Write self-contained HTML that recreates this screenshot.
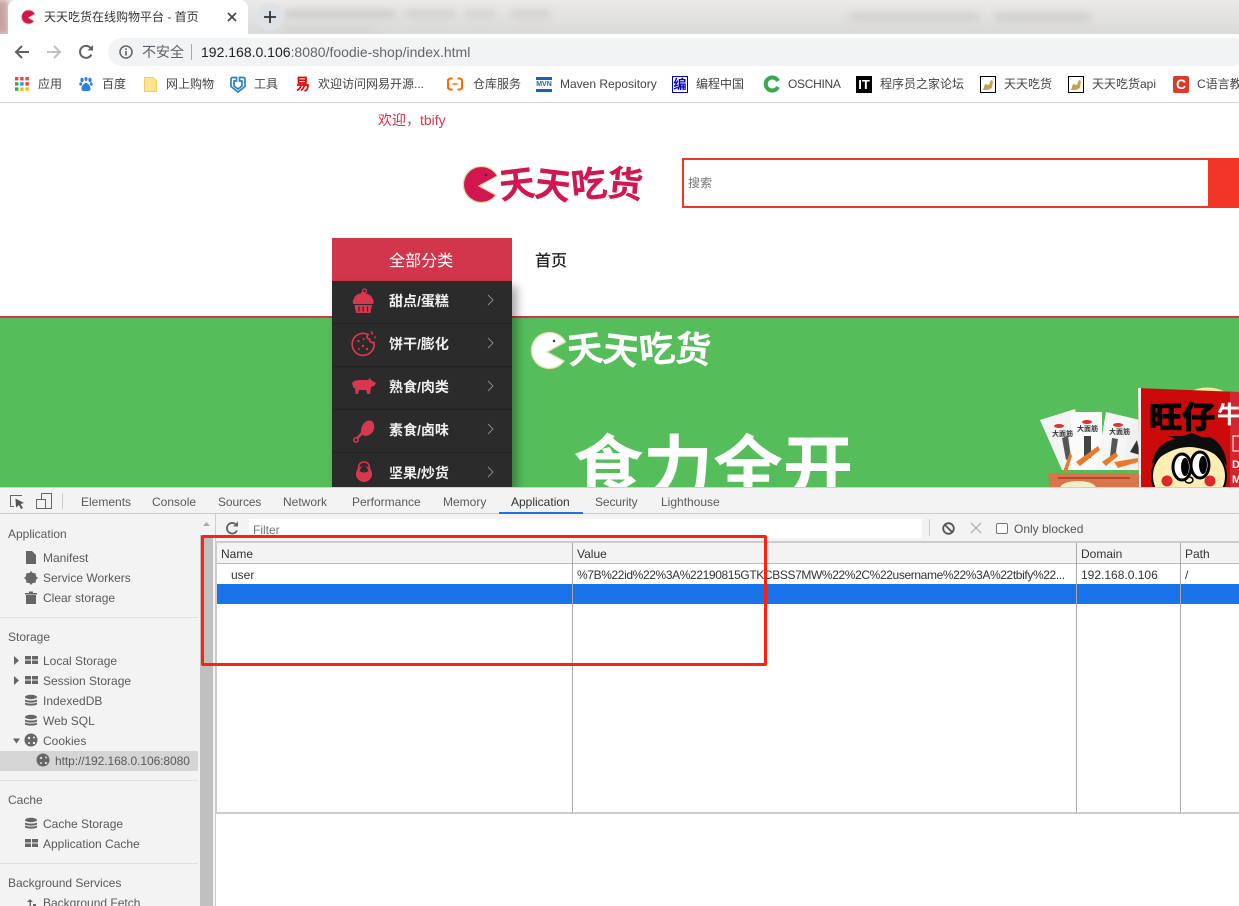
<!DOCTYPE html>
<html lang="zh"><head><meta charset="utf-8"><title>天天吃货</title>
<style>
html,body{margin:0;padding:0;width:1239px;height:906px;overflow:hidden;background:#fff}
body{position:relative;font-family:"Liberation Sans","Noto Sans CJK SC",sans-serif;font-size:12px;color:#444}
.a{position:absolute}
.t{position:absolute;white-space:nowrap;line-height:16px}
svg{position:absolute;overflow:visible}
.b{color:#444;top:76px}
.tab{color:#5a5a5a;top:494px}
.s{color:#5a5a5a}
.m{color:#f0f0f0;font-size:14px;font-weight:bold;left:389px}
.sep{position:absolute;left:0;width:198px;height:1px;background:#e0e0e0}
.v{position:absolute;width:1px;background:#aaa;top:543px;height:270px}
.c{position:absolute;left:332px;width:180px;height:43px;background:#2b2b2b;border-bottom:1px solid #222;box-sizing:border-box}
.r{display:inline-block}
</style></head><body>

<!-- tab strip -->
<div class="a" style="left:0;top:0;width:1239px;height:34px;background:linear-gradient(#eceae8,#d9d9d7);overflow:hidden">
 <div class="a" style="left:-6px;top:0;width:14px;height:34px;background:#c9a0a0;filter:blur(3px)"></div>
 <div class="a" style="left:285px;top:11px;width:110px;height:6px;background:#c6c6c6;filter:blur(4px)"></div>
 <div class="a" style="left:405px;top:11px;width:50px;height:6px;background:#cbcbcb;filter:blur(4px)"></div>
 <div class="a" style="left:465px;top:11px;width:30px;height:6px;background:#cecece;filter:blur(4px)"></div>
 <div class="a" style="left:510px;top:11px;width:40px;height:6px;background:#cbcbcb;filter:blur(4px)"></div>
 <div class="a" style="left:285px;top:27px;width:90px;height:4px;background:#d2d2d2;filter:blur(3px)"></div>
 <div class="a" style="left:850px;top:14px;width:130px;height:6px;background:#cbcbc9;filter:blur(4px)"></div>
 <div class="a" style="left:995px;top:14px;width:95px;height:6px;background:#c8c8c6;filter:blur(4px)"></div>
</div>
<div class="a" style="left:8px;top:0;width:240px;height:34px;background:#fff;border-radius:8px 8px 0 0"></div>
<div class="a" style="left:0;top:34px;width:1239px;height:68px;background:#fff"></div>
<div class="a" style="left:0;top:102px;width:1239px;height:1px;background:#d4d4d4"></div>
<svg style="left:20px;top:9px" width="16" height="16" viewBox="0 0 16 16"><path d="M8.500 1A7 7 0 1 0 14.200 12L8.500 8.800L15 5A7 7 0 0 0 8.500 1Z" fill="#d2164f" stroke="#e2dca8" stroke-width=".7"/></svg>
<div class="t" style="left:44px;top:9px;color:#333;font-size:12px">天天吃货在线购物平台 - 首页</div>
<svg style="left:227px;top:12px" width="10" height="10" viewBox="0 0 10 10"><path d="M1 1L9 9M9 1L1 9" stroke="#444" stroke-width="1.700"/></svg>
<div class="a" style="left:256px;top:3px;width:28px;height:28px;border-radius:50%;background:#dee1e6"></div>
<svg style="left:264px;top:11px" width="12" height="12" viewBox="0 0 12 12"><path d="M6 0V12M0 6H12" stroke="#333" stroke-width="1.800"/></svg>

<!-- nav -->
<svg style="left:14px;top:44px" width="16" height="16" viewBox="0 0 16 16"><path d="M15 8H2M8 2L2 8L8 14" fill="none" stroke="#5f6368" stroke-width="2"/></svg>
<svg style="left:46px;top:44px" width="16" height="16" viewBox="0 0 16 16"><path d="M1 8H14M8 2L14 8L8 14" fill="none" stroke="#bdc1c6" stroke-width="2"/></svg>
<svg style="left:78px;top:44px" width="16" height="16" viewBox="0 0 16 16"><path d="M13.400 10.500A6 6 0 1 1 12.600 4" fill="none" stroke="#5f6368" stroke-width="2"/><path d="M9.500 6.500H15V1Z" fill="#5f6368"/></svg>
<div class="a" style="left:108px;top:38px;width:1140px;height:28px;border-radius:14px;background:#f1f3f4"></div>
<svg style="left:119px;top:45px" width="14" height="14" viewBox="0 0 14 14"><circle cx="7" cy="7" r="6" fill="none" stroke="#5f6368" stroke-width="1.500"/><path d="M7 6V10.500M7 3.400V5" stroke="#5f6368" stroke-width="1.600"/></svg>
<div class="t" style="left:142px;top:44px;font-size:14px;color:#5f6368">不安全</div>
<div class="a" style="left:191px;top:44px;width:1px;height:16px;background:#a8a8a8"></div>
<div class="t" style="left:201px;top:44px;font-size:14px;color:#666"><span style="color:#222">192.168.0.106</span>:8080/foodie-shop/index.html</div>

<!-- bookmarks -->
<svg style="left:15px;top:77px" width="14" height="14" viewBox="0 0 14 14"><rect x="0" y="0" width="3.400" height="3.400" fill="#e8453c"/><rect x="5.200" y="0" width="3.400" height="3.400" fill="#e8453c"/><rect x="10.400" y="0" width="3.400" height="3.400" fill="#e8453c"/><rect x="0" y="5.200" width="3.400" height="3.400" fill="#34a853"/><rect x="5.200" y="5.200" width="3.400" height="3.400" fill="#4285f4"/><rect x="10.400" y="5.200" width="3.400" height="3.400" fill="#ea4335"/><rect x="0" y="10.400" width="3.400" height="3.400" fill="#34a853"/><rect x="5.200" y="10.400" width="3.400" height="3.400" fill="#fbbc05"/><rect x="10.400" y="10.400" width="3.400" height="3.400" fill="#fbbc05"/></svg>
<div class="t b" style="left:38px">应用</div>
<svg style="left:79px;top:77px" width="14" height="15" viewBox="0 0 14 15"><g fill="#2e7ee6"><ellipse cx="3" cy="3" rx="1.600" ry="2.200"/><ellipse cx="7" cy="2" rx="1.500" ry="2"/><ellipse cx="11" cy="3" rx="1.600" ry="2.200"/><ellipse cx="1.700" cy="7" rx="1.400" ry="1.800"/><ellipse cx="12.300" cy="7" rx="1.400" ry="1.800"/><path d="M7 6C4.500 6 2 10 2.500 12.500C3 14.500 5 14 7 14S11 14.500 11.500 12.500C12 10 9.500 6 7 6Z"/></g></svg>
<div class="t b" style="left:102px">百度</div>
<svg style="left:144px;top:77px" width="13" height="15" viewBox="0 0 13 15"><path d="M.5.500H9L12.500 4V14.500H.5Z" fill="#fee48d" stroke="#efcf6a"/></svg>
<div class="t b" style="left:166px">网上购物</div>
<svg style="left:230px;top:76px" width="16" height="17" viewBox="0 0 16 17"><path d="M3 1.500H6.500V5H4V10L8 13L12 10V5H9.500V1.500H13C14.500 1.500 15 2.500 15 3.500V10.500L8 16L1 10.500V3.500C1 2.500 1.500 1.500 3 1.500Z" fill="none" stroke="#2f7fc1" stroke-width="1.700"/></svg>
<div class="t b" style="left:254px">工具</div>
<svg style="left:296px;top:76px" width="13" height="16" viewBox="0 0 13 16"><path d="M2.500 1.500H10V7H2.500ZM2.500 4.200H10M1 9H12C12 12 11 14.500 8.500 15M5 9C4.500 11.500 3 13.500 1 14.500M8.500 9C8 11.500 7 13 5 14.500" fill="none" stroke="#e60000" stroke-width="1.700"/></svg>
<div class="t b" style="left:318px">欢迎访问网易开源...</div>
<svg style="left:447px;top:77px" width="16" height="14" viewBox="0 0 16 14"><path d="M5.500 1.500H2.500L1 3V11L2.500 12.500H5.500M10.500 1.500H13.500L15 3V11L13.500 12.500H10.500" fill="none" stroke="#ff6a00" stroke-width="2"/><path d="M5.500 7H10.500" stroke="#ff6a00" stroke-width="1.500"/></svg>
<div class="t b" style="left:473px">仓库服务</div>
<div class="a" style="left:536px;top:77px;width:16px;height:15px;background:#fff;border-top:3px solid #1c5fb5;border-bottom:3px solid #1c5fb5;box-sizing:border-box"></div>
<div class="t" style="left:536px;top:79px;width:16px;text-align:center;font:bold 7px/11px 'Liberation Sans',sans-serif;color:#1c5fb5">MVN</div>
<div class="t b" style="left:560px">Maven Repository</div>
<div class="a" style="left:672px;top:76px;width:16px;height:17px;border:1px solid #0000b0;box-sizing:border-box;text-align:center;font-size:13px;line-height:15px;font-weight:bold;color:#0000c8">编</div>
<div class="t b" style="left:696px">编程中国</div>
<svg style="left:764px;top:76px" width="16" height="16" viewBox="0 0 16 16"><path d="M14 5A6.500 6.500 0 1 0 14 11" fill="none" stroke="#38a852" stroke-width="4"/></svg>
<div class="t b" style="left:788px;letter-spacing:-.3px">OSCHINA</div>
<div class="a" style="left:856px;top:76px;width:16px;height:17px;background:#000;color:#fff;font:bold 13px/17px 'Liberation Sans',sans-serif;text-align:center">IT</div>
<div class="t b" style="left:880px">程序员之家论坛</div>
<svg style="left:980px;top:76px" width="16" height="17" viewBox="0 0 16 17"><rect x=".5" y=".5" width="15" height="16" fill="#fff" stroke="#000"/><path d="M3 14L5 8L9 9L11 4L13 5L12 12L8 14Z" fill="#c9a24d"/></svg>
<div class="t b" style="left:1004px">天天吃货</div>
<svg style="left:1068px;top:76px" width="16" height="17" viewBox="0 0 16 17"><rect x=".5" y=".5" width="15" height="16" fill="#fff" stroke="#000"/><path d="M3 14L5 8L9 9L11 4L13 5L12 12L8 14Z" fill="#c9a24d"/></svg>
<div class="t b" style="left:1092px">天天吃货api</div>
<div class="a" style="left:1173px;top:76px;width:16px;height:17px;border-radius:2px;background:#dd3a2c;color:#fff;font:bold 14px/17px 'Liberation Sans',sans-serif;text-align:center">C</div>
<div class="t b" style="left:1197px">C语言教程</div>

<!-- page -->
<div class="t" style="left:378px;top:112px;font-size:14px;color:#d2364c">欢迎，tbify</div>

<svg style="left:462px;top:165px" width="38" height="40" viewBox="0 0 38 40"><path d="M18.500 1.500A18 18 0 1 0 34 30L17 21L35.500 11A18 18 0 0 0 18.500 1.500Z" fill="#d2164f" stroke="#dcdca8" stroke-width="1.300"/><circle cx="24" cy="10" r="1.200" fill="#333"/></svg>
<div class="t" style="left:499px;top:165px;font-size:36px;line-height:40px;font-weight:700;color:#d2164f"><span class="r" style="transform:rotate(-7deg)">天</span><span class="r" style="transform:rotate(7deg) translateY(1px)">天</span><span class="r" style="transform:rotate(-6deg)">吃</span><span class="r" style="transform:rotate(5deg)">货</span></div>

<div class="a" style="left:682px;top:158px;width:557px;height:50px;background:#f23526"></div>
<div class="a" style="left:684px;top:160px;width:524px;height:46px;background:#fff"></div>
<div class="t" style="left:688px;top:175px;color:#757575">搜索</div>

<div class="a" style="left:332px;top:238px;width:180px;height:43px;background:#d2364c"></div>
<div class="t" style="left:389px;top:252px;font-size:16px;line-height:17px;color:#fff;padding-top:0;margin-top:0;transform:translateY(1px);letter-spacing:.1px">全部分类</div>
<div class="t" style="left:535px;top:253px;font-size:16px;line-height:17px;font-weight:500;color:#222">首页</div>

<div class="a" style="left:0;top:316px;width:1239px;height:2px;background:#d2364c"></div>
<div class="a" style="left:0;top:318px;width:1239px;height:170px;background:#55be5b"></div>

<!-- hero -->
<svg style="left:530px;top:331px" width="38" height="40" viewBox="0 0 38 40"><path d="M18.500 1.500A18 18 0 1 0 34 30L17 21L35.500 11A18 18 0 0 0 18.500 1.500Z" fill="#fff" stroke="#e4dfae" stroke-width="1.300"/><circle cx="24" cy="10" r="1.200" fill="#333"/></svg>
<div class="t" style="left:567px;top:330px;font-size:36px;line-height:40px;font-weight:700;color:#fff"><span class="r" style="transform:rotate(-7deg)">天</span><span class="r" style="transform:rotate(7deg) translateY(1px)">天</span><span class="r" style="transform:rotate(-6deg)">吃</span><span class="r" style="transform:rotate(5deg)">货</span></div>
<div class="t" style="left:573px;top:427px;font-size:70px;line-height:84px;font-weight:700;color:#fff">食力全开</div>

<!-- products -->
<svg style="left:1030px;top:380px" width="209" height="108" viewBox="0 0 209 108">
 <path d="M10 40L45 29L60 90H32Z" fill="#f4f4f4"/>
 <rect x="41" y="32" width="31" height="58" fill="#fbfbfb"/>
 <path d="M76 32L110 40L98 90H66Z" fill="#f6f6f6"/>
 <path d="M100 45L112 40V90H92Z" fill="#f0f0f0"/>
 <path d="M32 58L38 56L41 78L36 80Z" fill="#555"/><rect x="54" y="56" width="7" height="22" fill="#444"/><path d="M82 58L88 59L85 78L80 77Z" fill="#555"/><path d="M100 72L107 60L110 75Z" fill="#333"/>
 <text x="22" y="56" font-size="7" font-weight="bold" fill="#333" font-family="'Noto Sans CJK SC',sans-serif">大面筋</text>
 <text x="47" y="51" font-size="7" font-weight="bold" fill="#333" font-family="'Noto Sans CJK SC',sans-serif">大面筋</text>
 <text x="79" y="54" font-size="7" font-weight="bold" fill="#333" font-family="'Noto Sans CJK SC',sans-serif">大面筋</text>
 <path d="M33 92L40 72L42 76L37 92Z" fill="#e87a2a"/><path d="M46 82L68 66L70 70L50 86Z" fill="#e87a2a"/><path d="M72 82L86 72L88 76L76 86Z" fill="#e87a2a"/><path d="M84 82L108 78L108 82L88 88Z" fill="#e87a2a"/>
 <ellipse cx="29" cy="46" rx="5" ry="2" fill="#d33"/><ellipse cx="57" cy="42" rx="5" ry="2" fill="#d33"/><ellipse cx="88" cy="45" rx="5" ry="2" fill="#d33"/>
 <path d="M18 93H110V108H20Z" fill="#d8754a"/>
 <path d="M28 98H100" stroke="#b34a2b" stroke-width="2"/>
 <ellipse cx="48" cy="108" rx="18" ry="7" fill="#f5efc6"/>
 <path d="M160 12C170 6 185 6 195 12Z" fill="#f1e9a0"/>
 <path d="M108 8L209 12V108H109Z" fill="#cc0a0a"/>
 <path d="M108 8L111 8V108H109Z" fill="#eee"/>
 <path d="M200 12H209V108H200Z" fill="#d1323f" opacity=".7"/>
 <text x="119" y="48" font-size="30" font-weight="700" fill="#000" font-family="'Noto Sans CJK SC',sans-serif" stroke="#000" stroke-width="1.200" textLength="66" lengthAdjust="spacingAndGlyphs">旺仔</text>
 <text x="187" y="43" font-size="24" font-weight="700" fill="#fff" font-family="'Noto Sans CJK SC',sans-serif">牛</text>
 <rect x="203" y="56" width="8" height="15" fill="none" stroke="#fff"/>
 <text x="202" y="88" font-size="11" font-weight="bold" fill="#fff">D</text><text x="202" y="103" font-size="11" font-weight="bold" fill="#fff">M</text>
 <ellipse cx="159" cy="96" rx="37" ry="32" fill="#fdeeb3" stroke="#000" stroke-width="2"/>
 <path d="M122 84C124 68 136 60 146 59L138 56L152 56L162 53L172 57L180 57C190 62 196 72 197 86C190 76 180 70 168 68C152 64 134 72 122 84Z" fill="#0d0d0d"/>
 <ellipse cx="152" cy="87" rx="9" ry="13" fill="#fff" stroke="#000" stroke-width="3"/>
 <ellipse cx="170" cy="85" rx="9" ry="13" fill="#fff" stroke="#000" stroke-width="3"/>
 <ellipse cx="155" cy="87" rx="4" ry="9" fill="#000"/><ellipse cx="173" cy="85" rx="4" ry="9" fill="#000"/>
 <circle cx="137" cy="101" r="5.500" fill="#d92a2a"/><circle cx="180" cy="101" r="5.500" fill="#d92a2a"/>
 <ellipse cx="159" cy="100" rx="4" ry="3" fill="none" stroke="#000" stroke-width="1.500"/>
</svg>

<!-- category menu -->
<div class="a" style="left:332px;top:281px;width:180px;height:206px;box-shadow:5px 5px 9px rgba(0,0,0,.35)"></div>
<div class="c" style="top:281px"></div><div class="c" style="top:324px"></div><div class="c" style="top:367px"></div><div class="c" style="top:410px"></div><div class="c" style="top:453px"></div>
<div class="t m" style="top:293px">甜点/蛋糕</div>
<div class="t m" style="top:336px">饼干/膨化</div>
<div class="t m" style="top:379px">熟食/肉类</div>
<div class="t m" style="top:422px">素食/卤味</div>
<div class="t m" style="top:465px">坚果/炒货</div>
<svg style="left:487px;top:295px" width="7" height="188" viewBox="0 0 7 188"><g fill="none" stroke="#8e8e8e" stroke-width=".9"><path d="M1 0L6 5L1 10"/><path d="M1 43L6 48L1 53"/><path d="M1 86L6 91L1 96"/><path d="M1 129L6 134L1 139"/><path d="M1 172L6 177L1 182"/></g></svg>
<svg style="left:352px;top:288px" width="24" height="196" viewBox="0 0 24 196" fill="#d8384f">
 <path d="M11 3.500C12 3.500 13 4.500 13 5.500C17 5.500 20 8 20.500 11C22 12 22 15 21 16H1.500C.5 15 .5 12 2 11C2.500 8 5.500 5.500 9 5.500C9 4.500 10 3.500 11 3.500Z"/>
 <circle cx="12.500" cy="3" r="2" fill="none" stroke="#d8384f" stroke-width="1.200"/>
 <path d="M2.500 17H20L18.500 25H4Z"/>
 <path d="M7 18.500V23.500M11.200 18.500V23.500M15.500 18.500V23.500" stroke="#2b2b2b" stroke-width="1.200"/>
 <path d="M16 46.500A11 11 0 1 0 22 54.500C19 55 17 53 17.500 51C15 51 14 48.500 16 46.500Z" fill="none" stroke="#d8384f" stroke-width="1.700"/>
 <circle cx="6.500" cy="53" r="1.200"/><circle cx="11" cy="58" r="1.200"/><circle cx="7" cy="61" r="1"/><circle cx="15" cy="61" r="1.200"/><circle cx="11.500" cy="51" r="1"/>
 <path d="M19.500 43.500L20.500 46.500M22.500 48.500L23.500 50" stroke="#d8384f" stroke-width="1.700"/>
 <path d="M0 95C2 92 6 92 10 92H16L18 90L19 92L24 95L22 98L19 99L18 106H15.500L14 102H7L6 106H3.500L3 100L1.500 100Z"/>
 <path d="M9 146C8 138 13 132 18 132.500C22 133 23 138 21.500 142.500C19.500 147 13 150 9 146Z"/>
 <path d="M10 145L5.500 150" stroke="#d8384f" stroke-width="2.500"/><circle cx="4" cy="152" r="2.200" fill="none" stroke="#d8384f" stroke-width="1.500"/>
 <circle cx="12" cy="186" r="8"/>
 <path d="M6.500 181C6.500 175 9 174 12 174S17.500 175 17.500 181" fill="none" stroke="#d8384f" stroke-width="1.600"/>
 <path d="M7.500 183C9 179 10.500 178 12 178S15 179 16.500 183C14 185 10 185 7.500 183Z" fill="#2b2b2b"/>
</svg>

<!-- devtools -->
<div class="a" style="left:0;top:487px;width:1239px;height:419px;background:#fff;border-top:1px solid #cfcfcf;box-sizing:border-box"></div>
<div class="a" style="left:0;top:488px;width:1239px;height:26px;background:#f3f3f3;border-bottom:1px solid #ccc;box-sizing:border-box"></div>
<svg style="left:10px;top:495px" width="15" height="14" viewBox="0 0 15 14"><path d="M12 .5H.5V11.500H4" fill="none" stroke="#666"/><path d="M5.500 3.500L14 8L10.500 9L13 13L11 14L9 10L6 12.500Z" fill="#555"/></svg>
<svg style="left:36px;top:493px" width="16" height="16" viewBox="0 0 16 16"><path d="M5.500 .5H15.500V15.500H.5V6.500H5.500V.5M5.500 6.500H9.500V15.500" fill="none" stroke="#666"/></svg>
<div class="a" style="left:62px;top:493px;width:1px;height:16px;background:#ccc"></div>
<div class="t tab" style="left:81px">Elements</div><div class="t tab" style="left:152px">Console</div><div class="t tab" style="left:218px;letter-spacing:-.1px">Sources</div><div class="t tab" style="left:283px">Network</div><div class="t tab" style="left:352px">Performance</div><div class="t tab" style="left:443px">Memory</div><div class="t tab" style="left:511px;color:#333">Application</div><div class="t tab" style="left:595px;letter-spacing:-.1px">Security</div><div class="t tab" style="left:661px">Lighthouse</div>
<div class="a" style="left:499px;top:512px;width:84px;height:2px;background:#1a73e8"></div>

<!-- sidebar -->
<div class="a" style="left:0;top:514px;width:200px;height:392px;background:#f3f3f3"></div>
<div class="a" style="left:200px;top:514px;width:15px;height:392px;background:#f3f3f3"></div>
<div class="a" style="left:200px;top:535px;width:13px;height:371px;background:#c0c0c0"></div>
<div class="a" style="left:215px;top:514px;width:1px;height:392px;background:#ccc"></div>
<svg style="left:203px;top:522px" width="7" height="4"><path d="M0 4L3.500 0L7 4Z" fill="#aaa"/></svg>
<div class="t s" style="left:8px;top:526px">Application</div>
<div class="t s" style="left:43px;top:550px">Manifest</div>
<div class="t s" style="left:43px;top:570px">Service Workers</div>
<div class="t s" style="left:43px;top:590px">Clear storage</div>
<div class="sep" style="top:617px"></div>
<div class="t s" style="left:8px;top:629px">Storage</div>
<div class="t s" style="left:43px;top:653px">Local Storage</div>
<div class="t s" style="left:43px;top:673px">Session Storage</div>
<div class="t s" style="left:43px;top:693px">IndexedDB</div>
<div class="t s" style="left:43px;top:713px">Web SQL</div>
<div class="t s" style="left:43px;top:733px">Cookies</div>
<div class="a" style="left:0;top:751px;width:198px;height:20px;background:#d5d5d5"></div>
<div class="t s" style="left:55px;top:753px;letter-spacing:-.08px">http://192.168.0.106:8080</div>
<div class="sep" style="top:780px"></div>
<div class="t s" style="left:8px;top:792px">Cache</div>
<div class="t s" style="left:43px;top:816px">Cache Storage</div>
<div class="t s" style="left:43px;top:836px">Application Cache</div>
<div class="sep" style="top:863px"></div>
<div class="t s" style="left:8px;top:875px">Background Services</div>
<div class="t s" style="left:43px;top:895px">Background Fetch</div>

<svg style="left:0;top:0" width="200" height="906" viewBox="0 0 200 906" fill="#666">
 <path d="M26 551H32L36 555V564H26Z"/>
 <circle cx="31" cy="578" r="4" fill="none" stroke="#666" stroke-width="3"/><path d="M31 571.500V584.500M24.500 578H37.500M26.500 573.500L35.500 582.500M35.500 573.500L26.500 582.500" stroke="#666" stroke-width="1.800"/>
 <path d="M25 593H37V594.500H25ZM26 595H36V604H26ZM29 591.500H33V593H29Z"/>
 <path d="M14 656L19 660.500L14 665ZM14 676L19 680.500L14 685Z"/>
 <path d="M25 656H31V659.500H25ZM32 656H38V659.500H32ZM25 660.500H31V664H25ZM32 660.500H38V664H32ZM25 676H31V679.500H25ZM32 676H38V679.500H32ZM25 680.500H31V684H25ZM32 680.500H38V684H32Z"/>
 <ellipse cx="31" cy="697" rx="6" ry="2.200"/><path d="M25 699.500C27 701 35 701 37 699.500V701.500C35 703 27 703 25 701.500ZM25 702.500C27 704 35 704 37 702.500V704.500C35 706 27 706 25 704.500Z"/>
 <g transform="translate(0,20)"><ellipse cx="31" cy="697" rx="6" ry="2.200"/><path d="M25 699.500C27 701 35 701 37 699.500V701.500C35 703 27 703 25 701.500ZM25 702.500C27 704 35 704 37 702.500V704.500C35 706 27 706 25 704.500Z"/></g>
 <path d="M13 738.500H20L16.500 743.500Z"/>
 <circle cx="31" cy="740" r="6.500"/><circle cx="29" cy="738" r="1.200" fill="#f3f3f3"/><circle cx="34" cy="737.500" r="1" fill="#f3f3f3"/><circle cx="34" cy="743" r="1.200" fill="#f3f3f3"/><circle cx="29" cy="743" r="1" fill="#f3f3f3"/>
 <circle cx="43" cy="760" r="6.500"/><circle cx="41" cy="758" r="1.200" fill="#d5d5d5"/><circle cx="46" cy="757.500" r="1" fill="#d5d5d5"/><circle cx="46" cy="763" r="1.200" fill="#d5d5d5"/><circle cx="41" cy="763" r="1" fill="#d5d5d5"/>
 <g transform="translate(0,123)"><ellipse cx="31" cy="697" rx="6" ry="2.200"/><path d="M25 699.500C27 701 35 701 37 699.500V701.500C35 703 27 703 25 701.500ZM25 702.500C27 704 35 704 37 702.500V704.500C35 706 27 706 25 704.500Z"/></g>
 <path d="M25 839H31V842.500H25ZM32 839H38V842.500H32ZM25 843.500H31V847H25ZM32 843.500H38V847H32Z"/>
 <path d="M30 899L27 902H29.500V906H31V902H33ZM33 904H36V906H33Z"/>
</svg>

<!-- filter bar -->
<div class="a" style="left:216px;top:514px;width:1023px;height:27px;background:#f3f3f3"></div>
<svg style="left:225px;top:521px" width="14" height="14" viewBox="0 0 14 14"><path d="M12 9.500A5.300 5.300 0 1 1 11 3.500" fill="none" stroke="#666" stroke-width="1.800"/><path d="M8 5.500H13V.5Z" fill="#666"/></svg>
<div class="a" style="left:249px;top:519px;width:673px;height:19px;background:#fff"></div>
<div class="t" style="left:253px;top:522px;color:#757575">Filter</div>
<div class="a" style="left:929px;top:519px;width:1px;height:17px;background:#ccc"></div>
<svg style="left:942px;top:522px" width="13" height="13" viewBox="0 0 13 13"><circle cx="6.500" cy="6.500" r="5.300" fill="none" stroke="#555" stroke-width="1.800"/><path d="M3 3L10 10" stroke="#555" stroke-width="1.800"/></svg>
<svg style="left:971px;top:523px" width="10" height="10" viewBox="0 0 10 10"><path d="M0 0L10 10M10 0L0 10" stroke="#b5b5b5" stroke-width="1.400"/></svg>
<div class="a" style="left:996px;top:523px;width:12px;height:11px;border:1px solid #777;border-radius:2px;background:#fff;box-sizing:border-box"></div>
<div class="t" style="left:1014px;top:521px;color:#555">Only blocked</div>

<!-- table -->
<div class="a" style="left:216px;top:541px;width:1023px;height:2px;background:#ccc"></div>
<div class="a" style="left:217px;top:543px;width:1022px;height:20px;background:#f3f3f3"></div>
<div class="a" style="left:217px;top:563px;width:1022px;height:1px;background:#bbb"></div>
<div class="a" style="left:217px;top:584px;width:1022px;height:20px;background:#1a73e8"></div>
<div class="a" style="left:216px;top:543px;width:1px;height:270px;background:#ccc"></div>
<div class="a" style="left:216px;top:812px;width:1023px;height:2px;background:#ccc"></div>
<div class="v" style="left:572px"></div><div class="v" style="left:1076px"></div><div class="v" style="left:1180px"></div>
<div class="t" style="left:221px;top:546px;color:#333">Name</div>
<div class="t" style="left:577px;top:546px;color:#333">Value</div>
<div class="t" style="left:1081px;top:546px;color:#333">Domain</div>
<div class="t" style="left:1185px;top:546px;color:#333">Path</div>
<div class="t" style="left:231px;top:567px;color:#333">user</div>
<div class="t" style="left:577px;top:567px;width:495px;overflow:hidden;color:#333;letter-spacing:-.38px">%7B%22id%22%3A%22190815GTKCBSS7MW%22%2C%22username%22%3A%22tbify%22...</div>
<div class="t" style="left:1081px;top:567px;color:#333">192.168.0.106</div>
<div class="t" style="left:1185px;top:567px;color:#333">/</div>

<!-- annotation -->
<div class="a" style="left:201px;top:535px;width:566px;height:131px;border:3px solid #ff2010;border-radius:2px;box-sizing:border-box"></div>
</body></html>
